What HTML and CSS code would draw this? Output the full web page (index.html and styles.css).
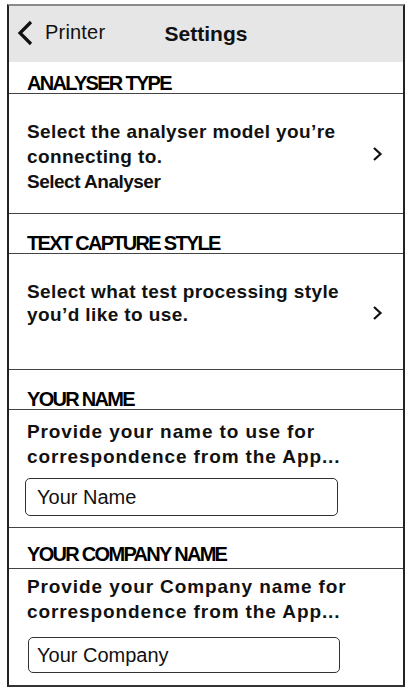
FILE: index.html
```html
<!DOCTYPE html>
<html lang="en">
<head>
<meta charset="utf-8">
<title>Settings</title>
<link rel="stylesheet" href="styles.css">
</head>
<body>
<div class="frame">
  <header class="topbar">
    <div class="back">
      <svg class="back-icon" width="16" height="26" viewBox="0 0 16 26"><polyline points="14,2 3,13 14,24" fill="none" stroke="#111" stroke-width="3.2" stroke-linejoin="miter"/></svg>
      <span class="back-label">Printer</span>
    </div>
    <div class="title">Settings</div>
    <div></div>
  </header>

  <div class="section-head head-first">ANALYSER TYPE</div>
  <div class="row row-link row-analyser">
    <div class="row-text">
      <p class="desc">Select the analyser model you’re connecting to.</p>
      <p class="value">Select Analyser</p>
    </div>
    <svg class="chev" width="11" height="16" viewBox="0 0 11 16"><polyline points="2,2 8.5,8 2,14" fill="none" stroke="#111" stroke-width="2.2"/></svg>
  </div>

  <div class="section-head">TEXT CAPTURE STYLE</div>
  <div class="row row-link row-style">
    <div class="row-text">
      <p class="desc desc-tight">Select what test processing style you’d like to use.</p>
    </div>
    <svg class="chev" width="11" height="16" viewBox="0 0 11 16"><polyline points="2,2 8.5,8 2,14" fill="none" stroke="#111" stroke-width="2.2"/></svg>
  </div>

  <div class="section-head">YOUR NAME</div>
  <div class="row row-field row-name">
    <p class="desc desc-wide">Provide your name to use for correspondence from the App...</p>
    <div class="field field-name">Your Name</div>
  </div>

  <div class="section-head head-last">YOUR COMPANY NAME</div>
  <div class="row row-field row-company">
    <p class="desc desc-wide">Provide your Company name for correspondence from the App...</p>
    <div class="field field-company">Your Company</div>
  </div>
</div>
</body>
</html>
```

FILE: styles.css
```css
* { box-sizing: border-box; }
html, body { margin: 0; padding: 0; background: #fff; }
body {
  font-family: "Liberation Sans", Arial, sans-serif;
  color: #111;
}
p { margin: 0; }

.frame {
  margin: 4px 0 0 7px;
  width: 398px;
  height: 683px;
  border-top: 2px solid #8a8a8a;
  border-left: 2px solid #222;
  border-right: 2px solid #222;
  border-bottom: 2px solid #333;
  display: flex;
  flex-direction: column;
}

.topbar {
  height: 56px;
  background: #e6e6e6;
  display: grid;
  grid-template-columns: 1fr auto 1fr;
  align-items: center;
  padding: 0 8px;
}
.back {
  display: flex;
  align-items: center;
  gap: 12px;
}
.back-icon { display: block; margin-top: -2px; }
.back-label {
  font-size: 20px;
  font-weight: 400;
  letter-spacing: 0.2px;
  margin-top: -4px;
}
.title {
  font-size: 21px;
  font-weight: 700;
}

.section-head {
  height: 40px;
  display: flex;
  align-items: flex-end;
  padding-left: 18px;
  border-bottom: 1px solid #444;
  font-size: 20px;
  line-height: 19px;
  font-weight: 700;
  letter-spacing: -1.7px;
  color: #000;
}
.head-first { height: 32px; }
.head-last { height: 41px; padding-bottom: 4px; }

.row {
  border-bottom: 1px solid #444;
  padding-left: 18px;
}
.row-company { border-bottom: none; flex: 1; }

.row-link {
  display: flex;
  justify-content: space-between;
  align-items: center;
  padding-right: 20px;
}
.row-text {
  align-self: flex-start;
  width: 336px;
}
.chev { display: block; flex: none; }

.row-analyser { height: 120px; }
.row-analyser .row-text { padding-top: 25px; }
.row-style { height: 116px; }
.row-style .row-text { padding-top: 26px; }
.row-style .chev { margin-top: 2px; }

.desc {
  font-size: 19px;
  line-height: 25px;
  font-weight: 700;
  letter-spacing: 0.4px;
}
.desc-tight { line-height: 23px; }
.desc-wide { letter-spacing: 0.9px; }
.value {
  font-size: 19px;
  line-height: 25px;
  font-weight: 700;
  letter-spacing: -0.5px;
}

.row-name { height: 118px; padding-top: 9px; }
.row-company { padding-top: 5px; }

.field {
  border: 1px solid #333;
  border-radius: 5px;
  width: 313px;
  display: flex;
  align-items: center;
  font-size: 20px;
  color: #111;
}
.field-name {
  height: 38px;
  margin: 9px 0 0 -2px;
  padding-left: 11px;
}
.field-company {
  height: 36px;
  margin: 13px 0 0 1px;
  width: 312px;
  padding-left: 8px;
}
```
